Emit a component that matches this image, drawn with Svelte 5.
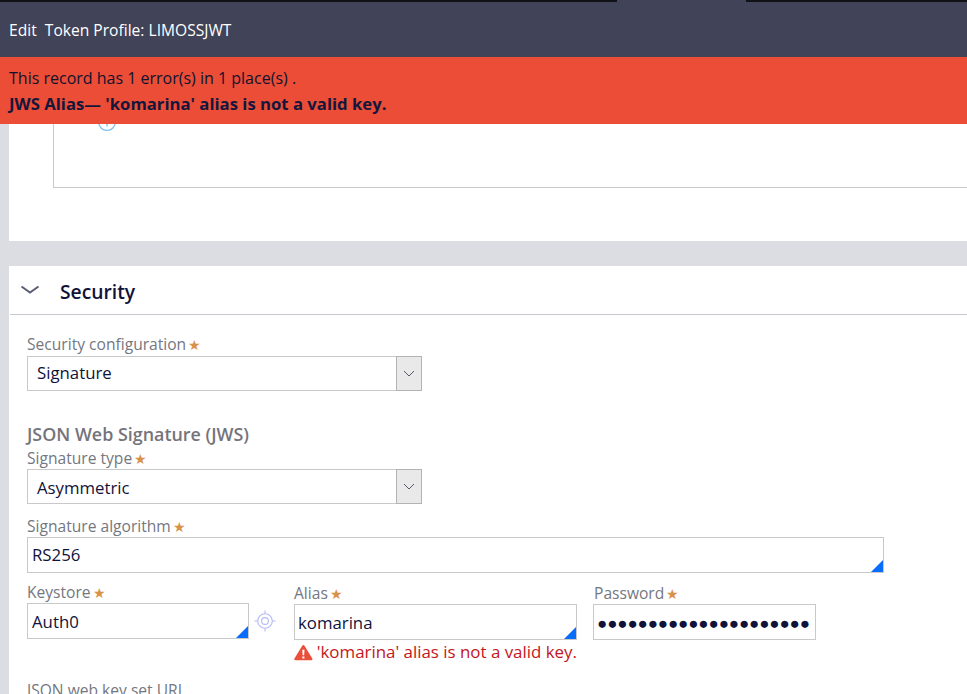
<script>
  const dots = '●'.repeat(21);
</script>

<div class="page">
  <div class="topline"><span class="notch"></span></div>
  <header class="head">Edit&nbsp; Token Profile: LIMOSSJWT</header>
  <div class="banner">
    <p>This record has 1 error(s) in 1 place(s) .</p>
    <p class="strong">JWS Alias— 'komarina' alias is not a valid key.</p>
  </div>

  <div class="main">
    <section class="card first">
      <div class="inner">
        <svg class="info" width="20" height="20" viewBox="0 0 20 20"><circle cx="10" cy="10" r="8.4" fill="none" stroke="#7cc0ec" stroke-width="1.4"/><path d="M10 8.5v6" stroke="#7cc0ec" stroke-width="1.4"/></svg>
      </div>
    </section>

    <section class="card sec">
      <div class="sec-head">
        <svg class="chev" width="20" height="10" viewBox="0 0 20 10"><path d="M1.500 1.500l8.500 6 8.500-6" fill="none" stroke="#5a5d72" stroke-width="2"/></svg>
        <h2>Security</h2>
      </div>

      <div class="body">
        <div class="lbl">Security configuration<i>★</i></div>
        <div class="select up">
          <span>Signature</span>
          <b><svg width="12" height="7" viewBox="0 0 12 7"><path d="M1 1l5 5 5-5" fill="none" stroke="#55576a" stroke-width="1"/></svg></b>
        </div>

        <h3>JSON Web Signature (JWS)</h3>
        <div class="lbl">Signature type<i>★</i></div>
        <div class="select tight">
          <span>Asymmetric</span>
          <b><svg width="12" height="7" viewBox="0 0 12 7"><path d="M1 1l5 5 5-5" fill="none" stroke="#55576a" stroke-width="1"/></svg></b>
        </div>

        <div class="lbl algo">Signature algorithm<i>★</i></div>
        <div class="input wide">RS256<em></em></div>

        <div class="row">
          <div class="col keystore">
            <div class="lbl">Keystore<i>★</i></div>
            <div class="ks">
              <div class="input">Auth0<em></em></div>
              <svg class="target" width="22" height="22" viewBox="0 0 22 22" fill="none" stroke="#b4b9f4" stroke-width="1.1"><circle cx="11" cy="11" r="7.3"/><circle cx="11" cy="11" r="3.4"/><path d="M11 0.5v3M11 18.5v3M0.5 11h3M18.5 11h3"/></svg>
            </div>
          </div>
          <div class="col alias">
            <div class="lbl">Alias<i>★</i></div>
            <div class="input pad">komarina<em></em></div>
            <div class="err">
              <svg width="20" height="17" viewBox="0 0 20 17"><path d="M10 .5a1.4 1.4 0 0 1 1.2.7l8.3 13.6a1.4 1.4 0 0 1-1.2 2H1.700a1.4 1.4 0 0 1-1.2-2L8.800 1.200A1.400 1.400 0 0 1 10 .5z" fill="#e9503c"/><path d="M8.800 5.500h2.400l-.4 6H9.200zM8.900 12.700h2.200v2.200H8.900z" fill="#fff"/></svg>
              <span>'komarina' alias is not a valid key.</span>
            </div>
          </div>
          <div class="col pass">
            <div class="lbl">Password<i>★</i></div>
            <div class="input pad dots">{dots}</div>
          </div>
        </div>

        <div class="lbl url">JSON web key set URL</div>
      </div>
    </section>
  </div>
</div>

<style>
  :global(body) { margin: 0; background: #fff; }
  .page { width: 967px; height: 694px; overflow: hidden; display: flex; flex-direction: column; font-family: "Open Sans", "Liberation Sans", sans-serif; color: #10123a; }
  .topline { height: 2px; flex: none; background: #111216; padding-left: 617px; }
  .notch { display: block; width: 129px; height: 2px; background: #414358; }
  .head { height: 55px; flex: none; box-sizing: border-box; background: #414358; color: #fff; font-size: 15.6px; line-height: 56px; padding-left: 9px; }
  .banner { position: relative; z-index: 1; height: 67px; flex: none; box-sizing: border-box; background: #eb4d36; padding: 8px 9px 0; font-size: 16px; line-height: 26px; color: #10122e; }
  .banner p { margin: 0; }
  .banner .strong { font-weight: 700; font-size: 16.7px; color: #14163c; }

  .main { flex: 1; min-height: 0; background: #dcdde2; padding-left: 9px; }
  .card { background: #fff; }
  .first { height: 117px; }
  .inner { position: relative; height: 63px; margin-left: 44px; border: 1px solid #c9c9c9; border-top: 0; border-right: 0; }
  .info { position: absolute; left: 43px; top: -12px; }

  .sec { margin-top: 25px; height: 428px; }
  .sec-head { height: 48px; margin-left: 1px; border-bottom: 1px solid #c6c8d2; display: flex; align-items: center; }
  .chev { margin-left: 10px; }
  h2 { margin: 3px 0 0 20px; font-size: 19.3px; font-weight: 600; color: #10123a; }

  .body { padding: 19px 0 0 18px; }
  .lbl { height: 20px; font-size: 15.6px; line-height: 20px; color: #74777f; white-space: nowrap; }
  .lbl i { font-style: normal; font-size: 14px; line-height: 0; color: #d8924a; margin-left: 2px; }
  .select { width: 395px; height: 35px; margin-top: 2px; box-sizing: border-box; border: 1px solid #c9c9c9; display: flex; align-items: center; justify-content: space-between; font-size: 16.8px; }
  .select.tight { margin-top: 1px; }
  .select.tight span { padding-top: 2px; }
  .select.up span { padding-bottom: 2px; }
  .select span { padding-left: 9px; }
  .select b { width: 26px; height: 35px; margin: 0 -1px 0 0; box-sizing: border-box; background: #e9e9e9; border: 1px solid #b3b3b3; display: flex; align-items: center; justify-content: center; }
  h3 { margin: 31px 0 2px; font-size: 17.9px; line-height: 24px; font-weight: 600; color: #74747a; }
  .algo { margin-top: 12px; }

  .input { position: relative; box-sizing: border-box; height: 36px; border: 1px solid #c9c9c9; font-size: 16.8px; line-height: 34px; padding-left: 4px; }
  .input.wide { width: 857px; margin-top: 1px; }
  .input.pad { padding-left: 3px; line-height: 36px; }
  .input em { position: absolute; right: 0; bottom: 0; width: 0; height: 0; border-style: solid; border-width: 0 0 12px 12px; border-color: transparent transparent #0a6cfa transparent; }

  .row { display: flex; margin-top: 9px; }
  .col .lbl { height: 21px; }
  .keystore { width: 267px; }
  .ks { display: flex; align-items: center; }
  .ks .input { width: 222px; line-height: 36px; }
  .target { margin-left: 5px; }
  .alias { width: 283px; padding-top: 1px; }
  .pass { width: 223px; margin-left: 16px; padding-top: 1px; }
  .pass .lbl { padding-left: 1px; }
  .dots { font-size: 16.8px; overflow: hidden; white-space: nowrap; }
  .err { display: flex; align-items: center; gap: 4px; margin-top: 1px; font-size: 16.9px; line-height: 22px; color: #c4161c; white-space: nowrap; }
  .url { margin-top: 17px; }
</style>
